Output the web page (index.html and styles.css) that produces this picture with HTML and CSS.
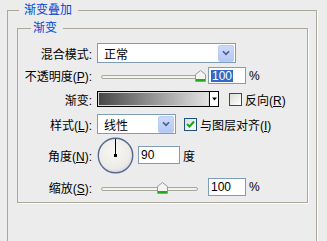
FILE: index.html
```html
<!DOCTYPE html>
<html>
<head>
  <title>渐变叠加</title>
  <link rel="stylesheet" href="styles.css">
</head>
<body>
  <fieldset class="group outer">
    <legend class="outer-title">渐变叠加</legend>
    <fieldset class="group inner">
      <legend class="inner-title">渐变</legend>

      <div class="row row-blend">
        <span class="label">混合模式:</span>
        <div class="select select-wide">
          <span class="select-text">正常</span>
          <span class="select-arrow">
            <svg width="16" height="16" viewBox="0 0 16 16"><path d="M4.5 6 L8 9.5 L11.5 6" fill="none" stroke="#4d6185" stroke-width="2"/></svg>
          </span>
        </div>
      </div>

      <div class="row row-opacity">
        <span class="label">不透明度(<u>P</u>):</span>
        <div class="slider">
          <div class="track"></div>
          <span class="thumb" style="left: 98px">
            <svg width="11" height="12" viewBox="0 0 11 12"><path d="M0.5 4.5 L5.5 0.5 L10.5 4.5 V11.5 H0.5 Z" fill="#f4f4ef" stroke="#8c9aa6"/><rect x="1" y="9" width="9" height="2" fill="#21a821"/></svg>
          </span>
        </div>
        <div class="field field-num"><span class="sel">100</span></div>
        <span class="unit">%</span>
      </div>

      <div class="row row-gradient">
        <span class="label">渐变:</span>
        <div class="grad">
          <div class="grad-fill"></div>
          <div class="grad-btn">
            <svg width="7" height="4" viewBox="0 0 7 4"><path d="M1 0.5 H6 L3.5 3.5 Z" fill="#000"/></svg>
          </div>
        </div>
        <span class="check"></span>
        <span class="check-label">反向(<u>R</u>)</span>
      </div>

      <div class="row row-style">
        <span class="label">样式(<u>L</u>):</span>
        <div class="select select-narrow">
          <span class="select-text">线性</span>
          <span class="select-arrow">
            <svg width="16" height="16" viewBox="0 0 16 16"><path d="M4.5 6 L8 9.5 L11.5 6" fill="none" stroke="#4d6185" stroke-width="2"/></svg>
          </span>
        </div>
        <span class="check checked">
          <svg width="11" height="11" viewBox="0 0 11 11"><path d="M2 5 L4.5 7.5 L9 2.5" fill="none" stroke="#21a121" stroke-width="2"/></svg>
        </span>
        <span class="check-label">与图层对齐(<u>I</u>)</span>
      </div>

      <div class="row row-angle">
        <span class="label">角度(<u>N</u>):</span>
        <div class="dial">
          <svg width="37" height="37" viewBox="0 0 37 37">
            <defs>
              <radialGradient id="dialFill" cx="0.45" cy="0.4" r="0.6">
                <stop offset="0" stop-color="#f8f8f6"/>
                <stop offset="0.8" stop-color="#ecebe6"/>
                <stop offset="1" stop-color="#d6d8e0"/>
              </radialGradient>
            </defs>
            <circle cx="18.5" cy="18.5" r="17.2" fill="url(#dialFill)" stroke="#56688f" stroke-width="1.4"/>
            <line x1="18.5" y1="18.5" x2="18.5" y2="2" stroke="#000" stroke-width="1"/>
            <rect x="17" y="17" width="3" height="3" fill="#000"/>
          </svg>
        </div>
        <div class="field field-angle">90</div>
        <span class="unit">度</span>
      </div>

      <div class="row row-scale">
        <span class="label">缩放(<u>S</u>):</span>
        <div class="slider">
          <div class="track"></div>
          <span class="thumb" style="left: 60px">
            <svg width="11" height="12" viewBox="0 0 11 12"><path d="M0.5 4.5 L5.5 0.5 L10.5 4.5 V11.5 H0.5 Z" fill="#f4f4ef" stroke="#8c9aa6"/><rect x="1" y="9" width="9" height="2" fill="#21a821"/></svg>
          </span>
        </div>
        <div class="field field-num">100</div>
        <span class="unit">%</span>
      </div>
    </fieldset>
  </fieldset>
</body>
</html>
```

FILE: styles.css
```css
html, body {
  margin: 0;
  padding: 0;
  height: 241px;
  overflow: hidden;
}

body {
  background-color: #ececec;
  font-family: "Liberation Sans", "Noto Sans CJK SC", sans-serif;
  font-size: 12px;
  color: #000;
}

.group {
  border: 1px solid #aca899;
  box-shadow: 1px 1px 0 #fff;
  padding: 0;
  min-width: 0;
}

/* the outer group runs on below the visible area, so no bottom edge */
.outer {
  box-sizing: border-box;
  margin: 2px 10px 0 7px;
  height: 239px;
  border-bottom: 0;
}

.inner {
  margin: 2px 8px 0 9px;
  padding-bottom: 6px;
}

legend {
  color: #0046d5;
  font-size: 12px;
  line-height: 16px;
}

.outer-title {
  margin-left: 11px;
  padding: 0 6px 0 5px;
}

.inner-title {
  margin-left: 13px;
  padding: 0 6px 0 2px;
}

.row {
  display: flex;
  align-items: center;
}

.row-blend { height: 20px; margin-top: 7px; }
.row-opacity { height: 17px; margin-top: 4px; }
.row-gradient { height: 16px; margin-top: 7px; }
.row-style { height: 20px; margin-top: 7px; }
.row-angle { height: 36px; margin-top: 3px; }
.row-scale { height: 18px; margin-top: 5px; }

.label {
  flex: none;
  width: 74px;
  margin-right: 5px;
  text-align: right;
  white-space: nowrap;
}

/* combo boxes */
.select {
  box-sizing: border-box;
  height: 20px;
  border: 1px solid #7f9db9;
  background-color: #fff;
  display: flex;
  align-items: center;
  justify-content: space-between;
}

.select-wide { width: 139px; }
.select-narrow { width: 79px; }

.select-text {
  padding-left: 6px;
}

.select-arrow {
  box-sizing: border-box;
  width: 16px;
  height: 17px;
  margin-right: 1px;
  border: 1px solid #bccdf3;
  border-radius: 2px;
  background: linear-gradient(#cddafc, #b4c8f6);
  display: flex;
  align-items: center;
  justify-content: center;
}

/* sliders */
.slider {
  position: relative;
  flex: none;
  width: 111px;
  height: 17px;
}

.track {
  box-sizing: border-box;
  position: absolute;
  left: 4px;
  top: 8px;
  width: 97px;
  height: 4px;
  border: 1px solid #a7a6a0;
  border-radius: 2px;
  background-color: #f3f2ec;
}

.thumb {
  position: absolute;
  top: 3px;
  width: 11px;
  height: 12px;
  line-height: 0;
}

/* text fields */
.field {
  box-sizing: border-box;
  border: 1px solid #7f9db9;
  background-color: #fff;
  padding-left: 2px;
  display: flex;
  align-items: center;
}

.field-num {
  width: 38px;
  height: 17px;
}

.row-scale .field-num {
  height: 18px;
}

.field-angle {
  width: 42px;
  height: 18px;
  margin-left: 4px;
}

.sel {
  background-color: #316ac5;
  color: #fff;
  line-height: 12px;
  padding: 0 1px;
}

.unit {
  margin-left: 3px;
}

/* gradient picker */
.grad {
  box-sizing: border-box;
  width: 122px;
  height: 16px;
  border: 1px solid #000;
  display: flex;
}

.grad-fill {
  flex: 1;
  background: linear-gradient(to right, #464646, #e4e4e4);
  box-shadow: inset 0 0 0 1px #d8d8d8;
}

.grad-btn {
  width: 8px;
  border-left: 1px solid #000;
  background-color: #fff;
  display: flex;
  align-items: center;
  justify-content: center;
}

/* check boxes */
.check {
  box-sizing: border-box;
  width: 13px;
  height: 13px;
  border: 1px solid #1c5180;
  background: linear-gradient(135deg, #dcdcd6, #fff);
  display: flex;
  align-items: center;
  justify-content: center;
}

.row-gradient .check {
  margin-left: 10px;
}

.row-style .check {
  margin-left: 8px;
}

.check-label {
  margin-left: 3px;
  white-space: nowrap;
}

.dial {
  width: 37px;
  height: 36px;
  line-height: 0;
}
```
